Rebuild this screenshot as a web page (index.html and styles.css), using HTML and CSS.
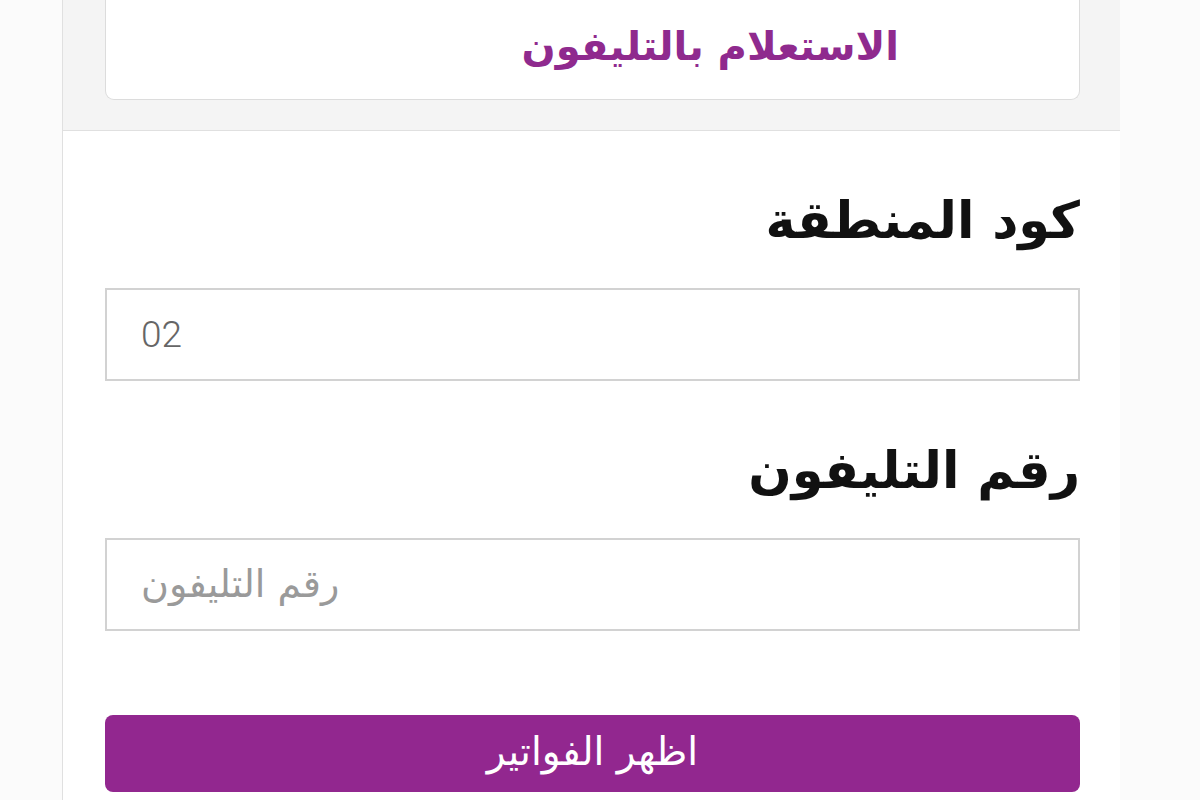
FILE: index.html
```html
<!DOCTYPE html>
<html lang="ar">
<head>
<meta charset="utf-8">
<title>الاستعلام بالتليفون</title>
<link rel="stylesheet" href="styles.css">
</head>
<body>
<div class="page">
  <div class="gutter"></div>
  <main class="panel">
    <section class="tabs">
      <div class="card">
        <span class="card-title">الاستعلام بالتليفون</span>
      </div>
    </section>
    <form class="form">
      <div class="group">
        <label class="label" for="code">كود المنطقة</label>
        <input class="field" id="code" type="text" value="02">
      </div>
      <div class="group">
        <label class="label" for="phone">رقم التليفون</label>
        <input class="field" id="phone" type="text" placeholder="رقم التليفون">
      </div>
      <button class="submit" type="button">اظهر الفواتير</button>
    </form>
  </main>
</div>
</body>
</html>
```

FILE: styles.css
```css
html, body {
  margin: 0;
  padding: 0;
  height: 100%;
  background: #fbfbfb;
  font-family: "DejaVu Sans", sans-serif;
}

.page {
  display: flex;
  min-height: 800px;
}

.gutter {
  width: 62px;
  flex: none;
}

.panel {
  width: 1057px;
  flex: none;
  background: #ffffff;
  border-left: 1px solid #e0e0e0;
}

.tabs {
  background: #f4f4f4;
  padding: 0 40px 30px 42px;
  border-bottom: 1px solid #e0e0e0;
}

.card {
  height: 100px;
  box-sizing: border-box;
  background: #ffffff;
  border: 1px solid #dcdcdc;
  border-top: 0;
  border-radius: 0 0 9px 9px;
  direction: rtl;
  display: flex;
  align-items: center;
  padding: 0 180px 8px 0;
}

.card-title {
  color: #8f2a8e;
  font-weight: bold;
  font-size: 40px;
}

.form {
  direction: rtl;
  padding: 0 40px 0 42px;
  display: flex;
  flex-direction: column;
}

.group {
  display: flex;
  flex-direction: column;
}

.label {
  margin-top: 60px;
  height: 60px;
  line-height: 60px;
  margin-bottom: 37px;
  font-size: 51px;
  font-weight: bold;
  color: #111;
}

.field {
  direction: ltr;
  text-align: left;
  height: 93px;
  box-sizing: border-box;
  border: 2px solid #d2d2d2;
  background: #fff;
  padding: 0 34px;
  font-family: Roboto, "DejaVu Sans", sans-serif;
  font-weight: 300;
  font-size: 37px;
  color: #666;
  outline: none;
}

.field::placeholder {
  color: #9a9a9a;
  font-family: "DejaVu Sans", sans-serif;
  font-weight: normal;
  font-size: 38px;
}

.submit {
  margin-top: 84px;
  height: 77px;
  border: 0;
  border-radius: 8px;
  background: #92278f;
  color: #ffffff;
  font-family: "DejaVu Sans", sans-serif;
  font-size: 39px;
  padding: 0 0 4px;
}
```
